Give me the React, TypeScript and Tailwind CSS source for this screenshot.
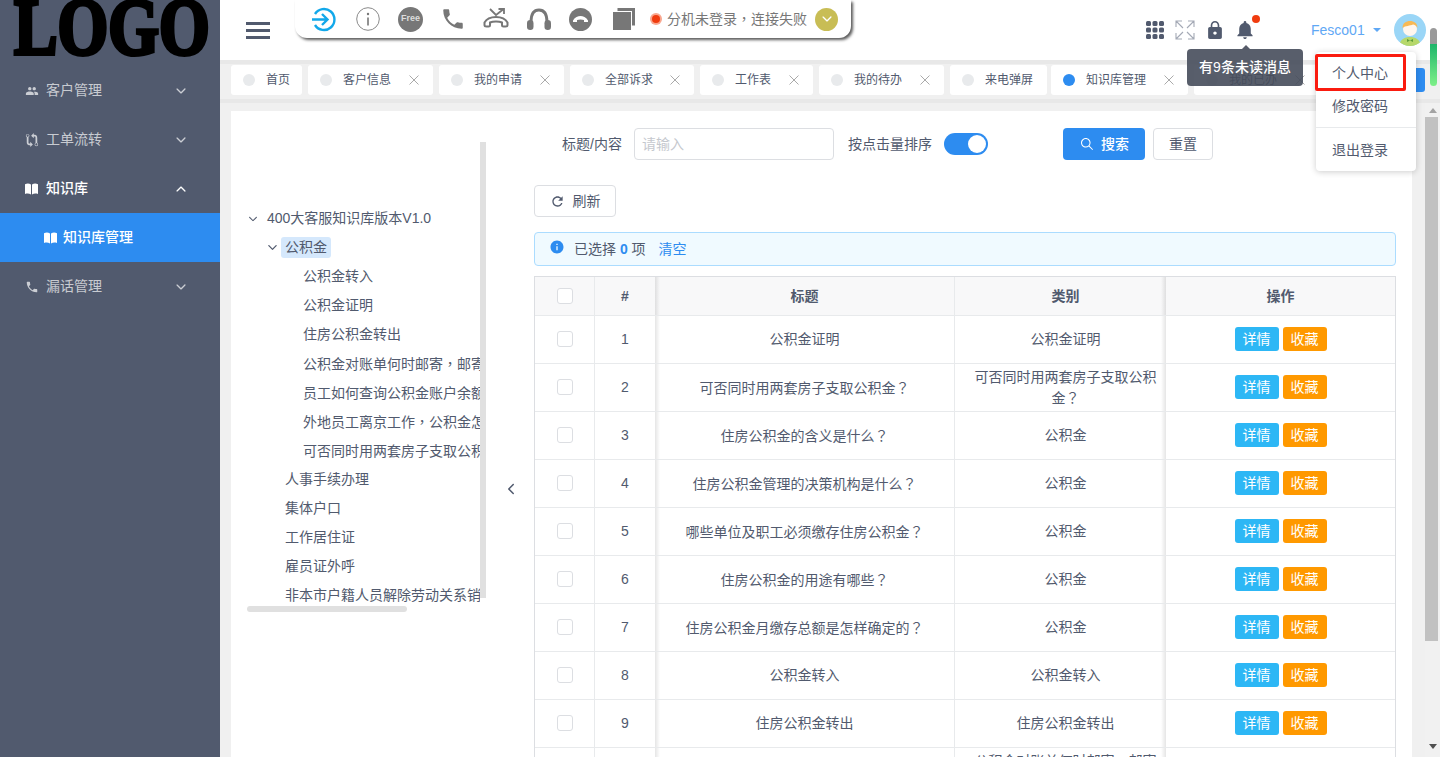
import {
  IoIosArrowBack,
  IoIosArrowDown,
  IoIosArrowUp,
  IoIosSearch,
  IoMdCall,
  IoMdGitCompare,
  IoMdInformationCircle,
  IoMdLock,
  IoMdNotifications,
  IoMdPeople,
  IoMdRefresh,
} from "react-icons/io";

const tabs = [
  { name: "首页", close: false, w: "w-[71px]" },
  { name: "客户信息", close: true, w: "w-[125px]" },
  { name: "我的申请", close: true, w: "w-[125px]" },
  { name: "全部诉求", close: true, w: "w-[124px]" },
  { name: "工作表", close: true, w: "w-[113px]" },
  { name: "我的待办", close: true, w: "w-[125px]" },
  { name: "来电弹屏", close: false, w: "w-[97px]" },
];

const rows = [
  ["1", "公积金证明", "公积金证明"],
  ["2", "可否同时用两套房子支取公积金？", "可否同时用两套房子支取公积金？"],
  ["3", "住房公积金的含义是什么？", "公积金"],
  ["4", "住房公积金管理的决策机构是什么？", "公积金"],
  ["5", "哪些单位及职工必须缴存住房公积金？", "公积金"],
  ["6", "住房公积金的用途有哪些？", "公积金"],
  ["7", "住房公积金月缴存总额是怎样确定的？", "公积金"],
  ["8", "公积金转入", "公积金转入"],
  ["9", "住房公积金转出", "住房公积金转出"],
  ["10", "公积金对账单何时邮寄，邮寄方式是什么？", "公积金对账单何时邮寄，邮寄方式是什么？"],
];

// the reference centres ， and ？ in their box, the TC font does that
const Zh = ({ t }: { t: string }) => (
  <>
    {t.split(/([，？])/).map((s, i) =>
      s === "，" || s === "？" ? (
        <span key={i} className="font-['Noto_Sans_CJK_TC',sans-serif]">{s}</span>
      ) : (
        s
      ),
    )}
  </>
);

const BookIcon = () => (
  <svg width="13" height="12" viewBox="0 0 13 12" fill="currentColor">
    <path d="M0 1.200C2 .2 4.200.2 6 1.500V11.500C4.200 10.300 2 10.300 0 11z" />
    <path d="M13 1.200C11 .2 8.800.2 7 1.500V11.500C8.800 10.300 11 10.300 13 11z" />
  </svg>
);

const MenuItem = ({ icon, label, open }: { icon: any; label: string; open?: boolean }) => (
  <div className={`flex h-[49px] items-center pl-[25px] pr-[32px] text-[14px] ${open ? "font-medium text-white" : "text-white/70"}`}>
    <span className="flex w-[21px] text-[14px]">{icon}</span>
    <span>{label}</span>
    <span className="ml-auto text-[14px]">{open ? <IoIosArrowUp /> : <IoIosArrowDown />}</span>
  </div>
);

const Sidebar = () => (
  <div className="w-[220px] shrink-0 bg-[#515a6e]">
    <div className="h-[66px] overflow-hidden pl-[14px]">
      <div className="mt-[-13px] origin-left scale-x-[.815] font-['Liberation_Serif',serif] text-[80px] leading-[80px] font-bold text-black [-webkit-text-stroke:4px_black]">
        LOGO
      </div>
    </div>
    <MenuItem icon={<IoMdPeople />} label="客户管理" />
    <MenuItem icon={<IoMdGitCompare />} label="工单流转" />
    <MenuItem icon={<BookIcon />} label="知识库" open />
    <div className="flex h-[49px] items-center bg-[#2d8cf0] pl-[44px] text-[14px] font-medium text-white">
      <span className="flex w-[19px]"><BookIcon /></span>
      知识库管理
    </div>
    <MenuItem icon={<IoMdCall />} label="漏话管理" />
  </div>
);

const PhoneBar = () => (
  <div className="ml-[25px] flex h-[38px] w-[556px] items-center self-start rounded-b-[12px] bg-white shadow-[2px_2px_3px_rgba(0,0,0,.65)]">
    <svg className="ml-[16px]" width="25" height="25" viewBox="0 0 25 25" fill="none" stroke="#12a8ea" strokeWidth="2.4">
      <path d="M4 7a10.500 10.500 0 1 1 0 11" />
      <path d="M1 12.500h15M11 7l5.500 5.500L11 18" />
    </svg>
    <svg className="ml-[20px]" width="24" height="24" viewBox="0 0 24 24" fill="none">
      <circle cx="12" cy="12" r="11.300" stroke="#8a8a8a" strokeWidth="1" />
      <circle cx="12" cy="7" r="1.200" fill="#777" />
      <path d="M12 10.500v8" stroke="#777" strokeWidth="1.600" />
    </svg>
    <div className="ml-[18px] flex h-[25px] w-[25px] items-center justify-center rounded-full bg-[#777] text-[9px] font-bold text-[#ddd]">Free</div>
    <svg className="ml-[17px]" width="26" height="26" viewBox="0 0 24 24" fill="#777">
      <path d="M6.620 10.790c1.440 2.830 3.760 5.140 6.590 6.590l2.200-2.200c.27-.27.67-.36 1.020-.24 1.120.37 2.330.57 3.570.57.55 0 1 .45 1 1V20c0 .55-.45 1-1 1-9.390 0-17-7.610-17-17 0-.55.45-1 1-1h3.500c.55 0 1 .45 1 1 0 1.250.2 2.450.57 3.570.11.35.03.74-.25 1.020l-2.200 2.200z" />
    </svg>
    <svg className="ml-[17px]" width="26" height="22" viewBox="0 0 26 22" fill="none" stroke="#777" strokeWidth="2">
      <path d="M1.500 17v-2.500C4 10 9 9 13 9s9 1 11.500 5.500V17c0 1-1 1.500-2 1.500h-2c-1 0-1.500-.7-1.500-1.500v-2.500c-3-1.500-9-1.500-12 0V17c0 .8-.5 1.500-1.500 1.500h-2c-1 0-2-.5-2-1.500z" />
      <path d="M7 1l6 6 7-5.500M15.500 1H21v5" strokeWidth="1.800" />
    </svg>
    <svg className="ml-[17px]" width="26" height="22" viewBox="0 0 26 22" fill="#777">
      <path d="M5 14C5 6 8 2 13 2s8 4 8 12" fill="none" stroke="#777" strokeWidth="2.800" />
      <rect x="1" y="12" width="6.500" height="10" rx="3.200" />
      <rect x="18.500" y="12" width="6.500" height="10" rx="3.200" />
    </svg>
    <div className="ml-[17px] flex h-[23px] w-[23px] items-center justify-center rounded-full bg-[#777]">
      <svg width="15" height="8" viewBox="0 0 15 8" fill="#fff">
        <path d="M0 5.500C2 2 5 1 7.500 1s5.500 1 7.500 4.500V7h-4V5c-2-.8-5-.8-7 0v2H0z" />
      </svg>
    </div>
    <svg className="ml-[21px]" width="22" height="22" viewBox="0 0 22 22" fill="#777">
      <path d="M4.500 0H22V17.500H19V3H4.500z" />
      <path d="M0 4h18v18H0z" />
    </svg>
    <div className="ml-[15px] flex h-[12px] w-[12px] items-center justify-center rounded-full bg-[#f9a78f]">
      <div className="h-[8px] w-[8px] rounded-full bg-[#f03c0f]" />
    </div>
    <span className="ml-[5px] text-[14px] text-[#777]"><Zh t="分机未登录，连接失败" /></span>
    <div className="ml-[8px] flex h-[23px] w-[23px] items-center justify-center rounded-full bg-[#c8bd55] text-[14px] text-white">
      <IoIosArrowDown />
    </div>
  </div>
);

const HeaderRight = () => (
  <div className="ml-[295px] flex h-[60px] items-center">
    <svg width="18" height="18" viewBox="0 0 18 18" fill="#515a6e">
      {[0, 6.5, 13].map((y) =>
        [0, 6.5, 13].map((x) => <rect key={`${x}-${y}`} x={x} y={y} width="5" height="5" rx="1.500" />),
      )}
    </svg>
    <svg className="ml-[11px]" width="20" height="20" viewBox="0 0 20 20" fill="none" stroke="#a4a9b5" strokeWidth="1.100">
      <path d="M1 7V1h6M1 1l7 7M13 1h6v6M19 1l-7 7M1 13v6h6M1 19l7-7M19 13v6h-6M19 19l-7-7" />
    </svg>
    <IoMdLock className="ml-[9px] text-[#515a6e]" size={22} />
    <IoMdNotifications className="ml-[8px] text-[#515a6e]" size={22} />
    <span className="ml-[55px] text-[14px] text-[#5fa8f5]">Fesco01</span>
    <div className="ml-[8px] h-0 w-0 border-x-[4px] border-t-[4px] border-x-transparent border-t-[#5fa8f5]" />
    <svg className="ml-[13px]" width="32" height="32" viewBox="0 0 32 32">
      <clipPath id="av"><circle cx="16" cy="16" r="16" /></clipPath>
      <g clipPath="url(#av)">
        <rect width="32" height="32" fill="#9ad6f7" />
        <path d="M5 32c1-7 6-9 11-9s10 2 11 9z" fill="#b6d86a" />
        <path d="M13 25l3 1.500 3-1.500v3l-3-1.500-3 1.500z" fill="#5f9e3a" />
        <circle cx="16" cy="15" r="7" fill="#fff6ee" />
        <path d="M8.500 14c0-5 3.500-7 7.500-7s7.500 2 7.500 7c-1-2-3-3.500-4.500-3.500-3 1.500-7.500 1-10.500 3.500z" fill="#f7b955" />
      </g>
    </svg>
  </div>
);

const TabBar = () => (
  <div className="flex h-[43px] items-start border-y-4 border-[#e8e8e8] bg-[#f0f0f0] pt-[1px] pl-[11px] pr-[15px]">
    <div className="flex gap-[6px]">
      {tabs.map((t) => (
        <Tab key={t.name} {...t} />
      ))}
      <div className="-ml-[2px]"><Tab name="知识库管理" close w="w-[137px]" active /></div>
      <Tab name="我的已办" close w="w-[125px]" />
    </div>
    <div className="ml-auto mt-[3px] h-[24px] w-[32px] rounded-[3px] bg-[#2d8cf0]" />
  </div>
);

const Tab = ({ name, close, w, active }: { name: string; close: boolean; w: string; active?: boolean }) => (
  <div className={`flex h-[30px] items-center rounded-[3px] bg-white pl-[12px] text-[12px] text-[#515a6e] ${w}`}>
    <div className={`h-[12px] w-[12px] shrink-0 rounded-full ${active ? "bg-[#2d8cf0]" : "bg-[#e8eaec]"}`} />
    <span className="ml-[11px]">{name}</span>
    {close && (
      <svg className="ml-auto mr-[14px]" width="10" height="10" viewBox="0 0 10 10" stroke="#aaa" strokeWidth="1">
        <path d="M.5.500l9 9M9.500.500l-9 9" />
      </svg>
    )}
  </div>
);

const TreeRow = ({ label, className }: { label: string; className: string }) => (
  <div className={`flex h-[29px] items-center whitespace-pre ${className}`}><span><Zh t={label} /></span></div>
);

const Tree = () => (
  <div className="flex pl-[16px] pt-[31px]">
    <div>
      <div className="flex">
        <div className="h-[462px] w-[233px] overflow-hidden pt-[62px] text-[14px] text-[#515a6e]">
          <div className="flex h-[29px] items-center whitespace-nowrap">
            <IoIosArrowDown className="w-[20px] pr-[8px] text-[#515a6e]" size={20} />
            400大客服知识库版本V1.0
          </div>
          <div className="flex h-[29px] items-center pl-[19px]">
            <IoIosArrowDown className="w-[15px] pr-[2px] text-[#515a6e]" size={15} />
            <span className="rounded-[3px] bg-[#d5e8fc] px-[4px] leading-[21px]">公积金</span>
          </div>
          <TreeRow className="pl-[56px]" label="公积金转入" />
          <TreeRow className="pl-[56px]" label="公积金证明" />
          <TreeRow className="pl-[56px]" label="住房公积金转出" />
          <TreeRow className="pl-[56px]" label="公积金对账单何时邮寄，邮寄方式是什么？" />
          <TreeRow className="pl-[56px]" label="员工如何查询公积金账户余额？" />
          <TreeRow className="pl-[56px]" label="外地员工离京工作，公积金怎么办？" />
          <TreeRow className="pl-[56px]" label="可否同时用两套房子支取公积金？" />
          <TreeRow className="pl-[38px]" label="人事手续办理" />
          <TreeRow className="pl-[38px]" label="集体户口" />
          <TreeRow className="pl-[38px]" label="工作居住证" />
          <TreeRow className="pl-[38px]" label="雇员证外呼" />
          <TreeRow className="pl-[38px]" label="非本市户籍人员解除劳动关系销户" />
        </div>
        <div className="h-[456px] w-[6px] bg-[#e0e0e0]" />
      </div>
      <div className="mt-[2px] h-[6px] w-[160px] rounded-full bg-[#e0e0e0]" />
    </div>
  </div>
);

const Filters = () => (
  <div className="flex h-[32px] items-center pl-[28px] text-[14px] text-[#515a6e]">
    <span>标题/内容</span>
    <div className="ml-[12px] flex h-[32px] w-[200px] items-center rounded-[4px] border border-[#dcdee2] pl-[7px] text-[#c5c8ce]">请输入</div>
    <span className="ml-[14px]">按点击量排序</span>
    <div className="ml-[12px] flex h-[22px] w-[44px] items-center justify-end rounded-full bg-[#2d8cf0] pr-[2px]">
      <div className="h-[18px] w-[18px] rounded-full bg-white" />
    </div>
    <button className="ml-[75px] flex h-[32px] w-[82px] items-center justify-center rounded-[4px] bg-[#2d8cf0] font-medium text-white">
      <IoIosSearch className="mr-[6px]" size={16} />
      搜索
    </button>
    <button className="ml-[8px] h-[32px] w-[60px] rounded-[4px] border border-[#dcdee2]">重置</button>
  </div>
);

const Table = () => (
  <div className="mt-[10px] w-[862px] border-x border-t border-[#dcdee2] text-[14px] text-[#515a6e]">
    <table className="w-[860px] table-fixed border-separate border-spacing-0 text-center">
      <colgroup>
        <col className="w-[60px]" />
        <col className="w-[60px]" />
        <col className="w-[300px]" />
        <col className="w-[211px]" />
        <col className="w-[229px]" />
      </colgroup>
      <thead>
        <tr className="h-[39px] bg-[#f8f8f9] font-bold">
          <th className="border-r border-b border-[#e8eaec]"><Check /></th>
          <th className="border-b border-[#e8eaec]">#</th>
          <th className="border-r border-b border-[#e8eaec] bg-[linear-gradient(to_right,rgba(0,0,0,.1),transparent_5px)]">标题</th>
          <th className="border-b border-[#e8eaec] bg-[linear-gradient(to_left,rgba(0,0,0,.1),transparent_5px)] pl-[10px]">类别</th>
          <th className="border-b border-[#e8eaec]">操作</th>
        </tr>
      </thead>
      <tbody>
        {rows.map((r) => (
          <tr key={r[0]} className="h-[48px]">
            <td className="border-r border-b border-[#e8eaec] pb-[1px]"><Check /></td>
            <td className="border-b border-[#e8eaec] pb-[1px]">{r[0]}</td>
            <td className="border-r border-b border-[#e8eaec] bg-[linear-gradient(to_right,rgba(0,0,0,.1),transparent_5px)] px-[10px] pt-[2px] pb-[3px] leading-[20px]"><Zh t={r[1]} /></td>
            <td className="border-b border-[#e8eaec] bg-[linear-gradient(to_left,rgba(0,0,0,.1),transparent_5px)] pl-[15px] pr-[5px] pt-[2px] pb-[3px] leading-[20px]"><Zh t={r[2]} /></td>
            <td className="border-b border-[#e8eaec] pb-[1px]">
              <div className="flex justify-center gap-[4px] text-white">
                <span className="h-[24px] w-[44px] rounded-[3px] bg-[#2db7f5] leading-[24px]">详情</span>
                <span className="h-[24px] w-[44px] rounded-[3px] bg-[#ff9900] leading-[24px]">收藏</span>
              </div>
            </td>
          </tr>
        ))}
      </tbody>
    </table>
  </div>
);

const Check = () => <div className="mx-auto h-[16px] w-[16px] rounded-[3px] border border-[#dcdee2] bg-white" />;

const ListPane = () => (
  <div className="w-[862px] shrink-0 pt-[17px]">
    <Filters />
    <button className="mt-[25px] flex h-[32px] w-[82px] items-center justify-center rounded-[4px] border border-[#dcdee2] text-[14px] text-[#515a6e]">
      <IoMdRefresh className="mr-[8px]" size={15} />
      刷新
    </button>
    <div className="mt-[15px] flex h-[34px] items-center rounded-[4px] border border-[#abdcff] bg-[#f0faff] pl-[14px] text-[14px] text-[#515a6e]">
      <IoMdInformationCircle className="mb-[4px] text-[#2d8cf0]" size={16} />
      <span className="ml-[9px]">已选择 <b className="text-[#2d8cf0]">0</b> 项</span>
      <span className="ml-[13px] text-[#2d8cf0]">清空</span>
    </div>
    <Table />
  </div>
);

const PageScroll = () => (
  <div className="relative ml-[13px] w-[15px] shrink-0 bg-[#f1f1f1]">
    <div className="mx-auto mt-[5px] h-0 w-0 border-x-[4px] border-b-[5px] border-x-transparent border-b-[#a3a3a3]" />
    <div className="mt-[4px] ml-0 h-[524px] w-[13px] bg-[#c1c1c1]" />
    <div className="mx-auto mt-[103px] h-0 w-0 border-x-[4px] border-t-[5px] border-x-transparent border-t-[#505050]" />
  </div>
);

export default function App() {
  return (
    <div className="relative flex h-[757px] overflow-hidden bg-white font-['Liberation_Sans','Noto_Sans_CJK_SC',sans-serif]">
      <Sidebar />
      <div className="min-w-0 flex-1">
        <div className="flex h-[60px]">
          <div className="ml-[26px] mt-[22px] flex h-[17px] w-[24px] flex-col justify-between">
            <div className="h-[3px] bg-[#515a6e]" />
            <div className="h-[3px] bg-[#515a6e]" />
            <div className="h-[3px] bg-[#515a6e]" />
          </div>
          <PhoneBar />
          <HeaderRight />
        </div>
        <TabBar />
        <div className="flex h-[654px] bg-[#f0f0f0] pl-[11px]">
          <div className="mt-[8px] flex w-[1181px] shrink-0 bg-white">
            <Tree />
            <div className="w-[48px] shrink-0 pl-[17px] pt-[370px] text-[#515a6e]">
              <IoIosArrowBack size={16} />
            </div>
            <ListPane />
          </div>
          <PageScroll />
        </div>
      </div>

      <div className="absolute left-[1430px] top-[28px] h-[58px] w-[7px] rounded-full bg-[linear-gradient(#9a9a9a_27%,#1fb66b_28%,#7ef089)]" />

      <div className="absolute left-[1252px] top-[15px] h-[8px] w-[8px] rounded-full bg-[#f03c0f]" />

      <div className="absolute left-[1187px] top-[49px] flex h-[37px] w-[116px] items-center justify-center rounded-[4px] bg-[rgba(70,76,91,.9)] text-[14px] font-medium text-white">
        有9条未读消息
      </div>
      <div className="absolute left-[1241px] top-[45px] h-0 w-0 border-x-[5px] border-b-[5px] border-x-transparent border-b-[#565b69]" />

      <div className="absolute left-[1316px] top-[52px] h-[119px] w-[100px] rounded-[4px] bg-white pt-[3px] pl-[16px] text-[14px] text-[#515a6e] shadow-[0_1px_6px_rgba(0,0,0,.2)]">
        <div className="flex h-[36px] items-center">个人中心</div>
        <div className="mt-[-3px] flex h-[36px] items-center">修改密码</div>
        <div className="mt-[3px] -ml-[16px] border-t border-[#e8eaec] pt-[4px] pl-[16px]">
          <div className="flex h-[36px] items-center">退出登录</div>
        </div>
      </div>
      <div className="absolute left-[1315px] top-[54px] h-[37px] w-[91px] rounded-[2px] border-[3px] border-[#fa1b0f]" />
    </div>
  );
}
